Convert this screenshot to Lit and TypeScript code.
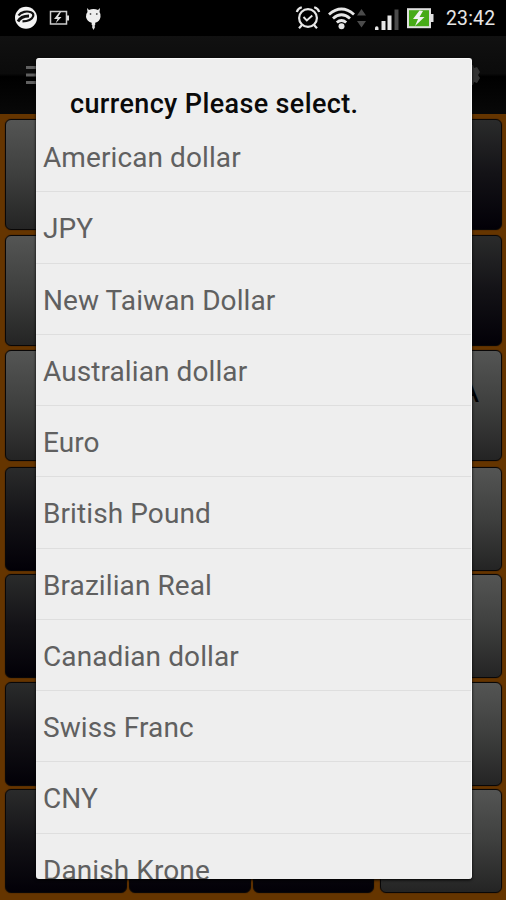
import { LitElement, html, css, svg } from "lit";
import { customElement } from "lit/decorators.js";

const CURRENCIES = [
  "American dollar", "JPY", "New Taiwan Dollar", "Australian dollar", "Euro",
  "British Pound", "Brazilian Real", "Canadian dollar", "Swiss Franc", "CNY", "Danish Krone",
];

@customElement("status-bar")
class StatusBar extends LitElement {
  static styles = css`
    :host { display: block; height: 36px; background: #000; color: #e6e6e6; }
    .bar { display: flex; height: 36px; }
    .left { width: 120px; }
    .gap { flex: 1; }
    .right { width: 151px; }
    .time { width: 61px; padding-left: 1px; box-sizing: border-box; font: 400 19.4px/38px Roboto, sans-serif; letter-spacing: 0.2px; white-space: nowrap; }
    svg { display: block; height: 36px; }
  `;
  render() {
    return html`<div class="bar">
      <svg class="left" viewBox="0 0 120 36">
        <circle cx="26" cy="17.8" r="11" fill="#f4f4f4"/>
        <path d="M18.500 15.500C21 11.500 27 10.800 31 12.200C35 14 33.500 18 29.500 20C27.500 21 25 21.300 22.500 21.300" fill="none" stroke="#111" stroke-width="2.200"/>
        <path d="M18 21.500C20 17.500 23 16 29 16" fill="none" stroke="#111" stroke-width="2.800"/>
        <rect x="50.500" y="11.500" width="16" height="12.500" fill="none" stroke="#ccc" stroke-width="1.500"/>
        <path d="M67 15.500h2v5h-2zM59.500 12l-5.500 7h3.500l-2 4.500 6-6.500h-3.500l3-5z" fill="#ddd"/>
        <path d="M87 8l2 2q4.500-2.200 9 0l2-2-.5 4q1.500 2 1 5-.7 4.500-5.300 5.800v2.200h-3.500v-2.200Q87 21.500 86 17q-.4-3 1.500-5z" fill="#eee"/>
        <path d="M92.200 24.500h2.600v3l-1.300 2.500-1.300-2.500z" fill="#ddd"/>
        <circle cx="90.500" cy="14" r=".9" fill="#555"/><circle cx="96.800" cy="14" r=".9" fill="#555"/>
      </svg>
      <div class="gap"></div>
      <svg class="right" viewBox="294 0 151 36">
        <g fill="none" stroke="#e6e6e6" stroke-width="2.200">
          <circle cx="308" cy="18" r="8.900"/>
          <path d="M296.800 12q1-3.500 5-4.700M319.200 12q-1-3.500-5-4.700M302 25l-3 3.300M314 25l3 3.300"/>
          <path d="M303.500 17l3.300 3.500 5.500-5" stroke-width="1.900"/>
          <path d="M329 14.500Q341.500 3.500 354 14.500M333 18.500Q341.500 11 350 18.500M336.800 22.500Q341.500 18.500 346.200 22.500" stroke-width="2.900"/>
        </g>
        <circle cx="341.500" cy="26.200" r="3" fill="#e6e6e6"/>
        <path d="M361.500 9l4.500 6.500h-9zM361.500 27.500l4.500-6.500h-9z" fill="#4b4b4b"/>
        <path d="M375 28a1.700 1.700 0 1 1 3.500 0v2H375zM381.500 21h4v9h-4zM387.500 15.500h4v14.500h-4z" fill="#e6e6e6"/>
        <path d="M394.500 9.500h4V30h-4z" fill="#4b4b4b"/>
        ${svg`<rect x="408" y="9.200" width="22" height="18" fill="#47ab17" stroke="#e0e0e0" stroke-width="2"/>`}
        <path d="M431 14h2.500v8H431z" fill="#e0e0e0"/>
        <path d="M419.500 10.500l-6.500 8.500h5l-3 7 9.500-9h-5l3.500-6z" fill="#f2f2f2"/>
      </svg>
      <div class="time">23:42</div>
    </div>`;
  }
}

@customElement("key-pad")
class KeyPad extends LitElement {
  static styles = css`
    :host { display: block; height: 786px; background: #653500; overflow: hidden; }
    .grid {
      display: grid; padding: 5px 4px 0 5px; column-gap: 2px;
      grid-template-columns: 122px 122px 121px 1fr;
      grid-template-rows: 116px 115px 117px 107px 108px 107px 104px;
    }
    .key { height: 111px; border: 1px solid #090707; border-radius: 6px; background: linear-gradient(#2a2b2b, #131216 50%, #020007); box-shadow: 0 0 1px #120900; box-sizing: border-box; font: 32px/80px Roboto, sans-serif; color: #000; }
    .key.light { background: linear-gradient(#545554, #3e3f3e 50%, #242424); }
    .key.last { margin-left: 4px; }
    .key.mark { text-align: right; padding-right: 22px; }
    .key.low { height: 104px; }
  `;
  render() {
    const keys = [];
    for (let r = 0; r < 7; r++)
      for (let c = 0; c < 4; c++) {
        const light = r < 3 ? (c < 3 || r === 2) : c === 3;
        keys.push(html`<div class="key ${light ? "light" : ""} ${c === 3 ? "last" : ""} ${r === 2 && c === 3 ? "mark" : ""} ${r > 2 ? "low" : ""}">${r === 2 && c === 3 ? "CA" : ""}</div>`);
      }
    return html`<div class="grid">${keys}</div>`;
  }
}

@customElement("currency-dialog")
class CurrencyDialog extends LitElement {
  static styles = css`
    :host { display: flex; flex-direction: column; box-sizing: border-box; background: #eee; border-radius: 3px; overflow: hidden; box-shadow: 0 1px 3px #000; font-family: Roboto, sans-serif; border-top: 1px solid #fafafa; border-right: 1px solid #fafafa; }
    .title { flex: none; height: 62px; padding: 0 34px; font-size: 27px; font-weight: 500; letter-spacing: 0.37px; line-height: 90px; color: #0a0a0a; white-space: nowrap; }
    .list { flex: 1; min-height: 0; overflow: hidden; }
    .item { height: 71.25px; box-sizing: border-box; padding-left: 7px; border-bottom: 1.500px solid #dedede; font-size: 28px; letter-spacing: 0.09px; line-height: 73px; color: #606060; white-space: nowrap; }
  `;
  render() {
    return html`<div class="title">currency Please select.</div>
      <div class="list">${CURRENCIES.map((c) => html`<div class="item">${c}</div>`)}</div>`;
  }
}

@customElement("app-root")
class AppRoot extends LitElement {
  static styles = css`
    :host { display: block; position: relative; width: 506px; height: 900px; overflow: hidden; background: #000; }
    .toolbar { height: 78px; display: flex; justify-content: space-between; align-items: center; background: linear-gradient(#111, #0b0b0b 48%, #000 52%, #080808); }
    .menu { margin-left: 26px; width: 24px; height: 24px; }
    .gear { margin-right: 24px; width: 24px; height: 24px; }
    .dialog { position: absolute; left: 36px; top: 58px; width: 436px; height: 821px; }
  `;
  render() {
    return html`<status-bar></status-bar>
      <div class="toolbar">
        <svg class="menu" viewBox="0 0 24 24"><path d="M0 4.500h24M0 12h24M0 19.500h24" stroke="#606060" stroke-width="3"/></svg>
        <svg class="gear" viewBox="0 0 24 24"><path d="M9 2h6l1 3 3-1 3 5-2 3 2 3-3 5-3-1-1 3H9l-1-3-3 1-3-5 2-3-2-3 3-5 3 1z" fill="#333"/></svg>
      </div>
      <key-pad></key-pad>
      <currency-dialog class="dialog"></currency-dialog>`;
  }
}
